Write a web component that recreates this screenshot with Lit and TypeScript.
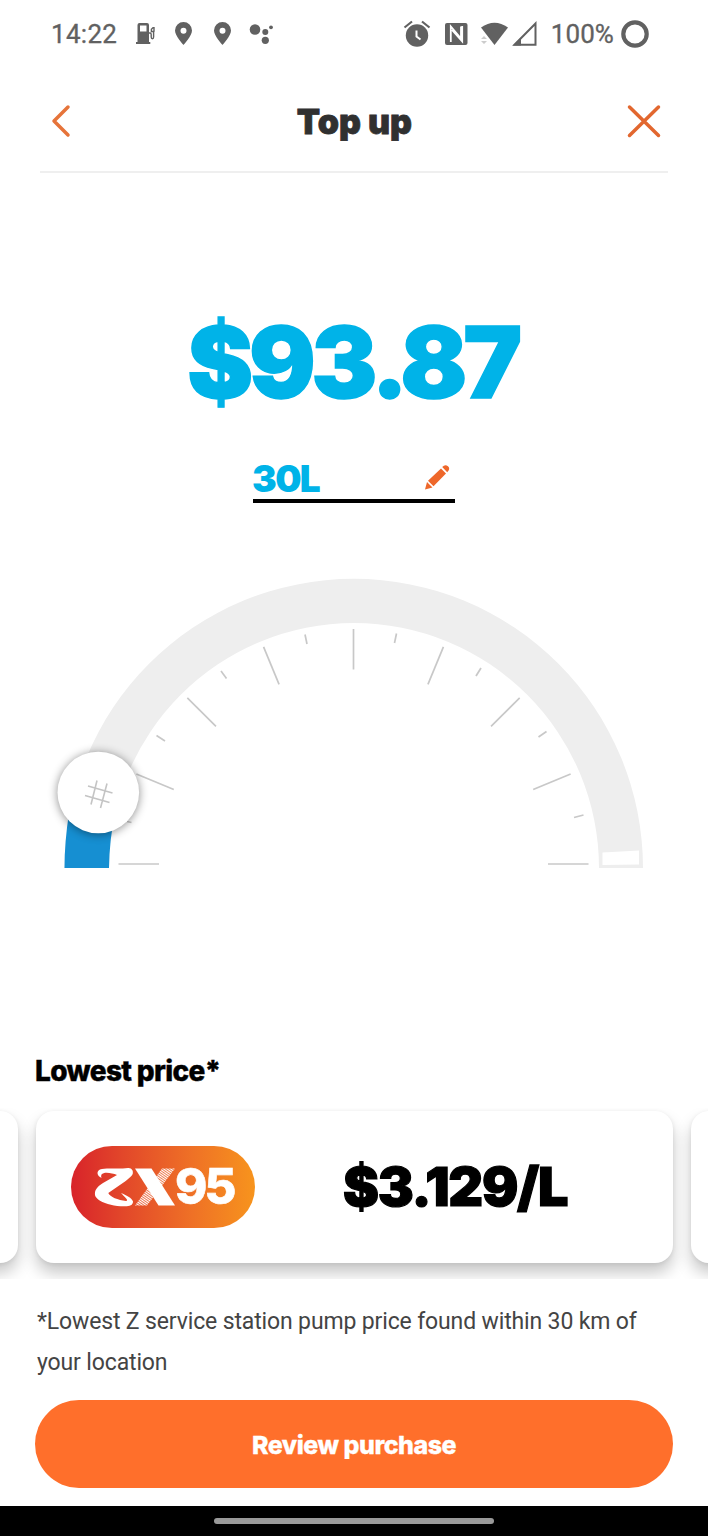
import { LitElement, html, svg, css, nothing } from "lit";
import { customElement, property } from "lit/decorators.js";

const polar = (r: number, deg: number) => {
  const a = (deg * Math.PI) / 180;
  return [289.5 - r * Math.cos(a), 287 - r * Math.sin(a)];
};

const MINOR_TICKS = [
  [63, 244.5, 67.5, 245.5],
  [92.5, 158.5, 101, 164],
  [157, 94, 162.5, 101.5],
  [241, 57.5, 243, 67],
  [332.5, 56.5, 330.5, 66],
  [417, 91, 412, 99],
  [482.5, 154.5, 474.5, 160],
  [519.5, 238, 510, 240.5],
];

@customElement("status-bar")
class StatusBar extends LitElement {
  static styles = css`
    :host { display: block; }
    .bar { height: 67px; display: flex; align-items: center; justify-content: space-between;
      padding: 0 59px 0 51px; color: #616161; font: 400 26px/30px Roboto, sans-serif; }
    svg { display: block; }
    .group { display: flex; align-items: center; }
    .time { letter-spacing: 0.3px; width: 83px; -webkit-text-stroke: 0.3px #616161; }
    .percent { letter-spacing: 0.1px; margin: 0 7px 0 13px; -webkit-text-stroke: 0.3px #616161; }
  `;
  render() {
    return html`<div class="bar">
      <div class="group">
        <span class="time">14:22</span>
        <svg width="144" height="30" viewBox="134 19 144 30" fill="#616161">
          <path fill-rule="evenodd" d="M137.500 42V25q0-2 2-2h7.500q2 0 2 2v17h1.300v2H136v-2zM140 25.500v6h6.500v-6z" />
          <path d="M149 33h1q1.200 0 1.200 1.500v2.500q0 1.700 1.200 1.700t1.200-1.700V31.500h-2.200v-2.300l1.600-1.400h1v4" fill="none" stroke="#616161" stroke-width="1.400" />
          <path fill-rule="evenodd" d="M183.500 22a8.500 8.500 0 0 1 8.500 8.500c0 5.500-8.500 14.500-8.500 14.500s-8.500-9-8.500-14.500a8.500 8.500 0 0 1 8.500-8.500zm0 5.700a3 3 0 1 0 0 6 3 3 0 0 0 0-6z" />
          <path fill-rule="evenodd" d="M222.500 22a8.500 8.500 0 0 1 8.500 8.500c0 5.500-8.500 14.500-8.500 14.500s-8.500-9-8.500-14.500a8.500 8.500 0 0 1 8.500-8.500zm0 5.700a3 3 0 1 0 0 6 3 3 0 0 0 0-6z" />
          <circle cx="255" cy="29.500" r="5.300" />
          <circle cx="265.300" cy="32" r="3" />
          <circle cx="271" cy="27.300" r="1.900" />
          <circle cx="265.300" cy="40.300" r="3.600" />
        </svg>
      </div>
      <div class="group">
        <svg width="136" height="30" viewBox="402 19 136 30" fill="#616161">
          <circle cx="417" cy="35.500" r="11.200" />
          <path d="M404.500 27.500l7.500-6M429.500 27.500l-7.500-6" stroke="#616161" stroke-width="2.200" />
          <path d="M416.500 30.500v6l4 3" fill="none" stroke="#fff" stroke-width="2" />
          <rect x="445" y="23" width="22.500" height="22" rx="2" />
          <path d="M450.800 42V26.500L461 38.500V26.500M462.200 26v15.500L452 30" fill="none" stroke="#fff" stroke-width="1.800" />
          <path d="M481 27.500q13.500-9.500 27 0L494.500 45z" />
          <path d="M481 39l3-3 3 3zM481 41l3 3 3-3z" fill="#ccc" />
          <path d="M514.500 44.700L535.500 23.500v21.200z" fill="none" stroke="#616161" stroke-width="2" />
          <path d="M513 45.500l8-8v8z" />
        </svg>
        <span class="percent">100%</span>
        <svg width="28" height="28" viewBox="0 0 28 28"><circle cx="14" cy="14" r="11.700" fill="none" stroke="#616161" stroke-width="4.200" /></svg>
      </div>
    </div>`;
  }
}

@customElement("fuel-gauge")
class FuelGauge extends LitElement {
  static styles = css`
    :host { display: block; }
    svg { display: block; overflow: visible; }
    .knob { filter: drop-shadow(0 1px 5px rgba(0, 0, 0, 0.45)); }
  `;
  render() {
    const major = Array.from({ length: 9 }, (_, i) => {
      const [x1, y1] = polar(235, i * 22.5);
      const [x2, y2] = polar(194.5, i * 22.5);
      return svg`<line x1=${x1} y1=${y1} x2=${x2} y2=${y2} />`;
    });
    return html`<svg width="580" height="292" viewBox="0 0 580 292">
      <path d="M.5 291A289.250 289.250 0 0 1 579 291H535A245 245 0 0 0 45 291z" fill="#eeeeee" />
      <path d="M538.500 275.500L575 273.500V287.500L538.500 288z" fill="#fff" />
      <path d="M.5 291Q.5 265 5 236H51Q45.500 262 45 291z" fill="#168fd2" />
      <g stroke="#c8c8c8" stroke-width="1.700">
        ${major}
        ${MINOR_TICKS.map((t) => svg`<line x1=${t[0]} y1=${t[1]} x2=${t[2]} y2=${t[3]} />`)}
      </g>
      <circle class="knob" cx="34.300" cy="215.500" r="40.800" fill="#fff" />
      <path d="M33 203.500l-6 24M43 206.500l-6.500 24.500M24 209l24.500 7M21 218.500l24.500 7" stroke="#c4c4c4" stroke-width="1.600" />
    </svg>`;
  }
}

@customElement("price-card")
class PriceCard extends LitElement {
  static styles = css`
    :host { display: flex; align-items: center; width: 637px; height: 152px; flex: none; box-sizing: border-box;
      padding-left: 35px; border-radius: 18px; background: #fff;
      box-shadow: 0 10px 16px rgba(0, 0, 0, 0.22), 0 1px 4px rgba(0, 0, 0, 0.07); }
    .badge { width: 184px; height: 82px; border-radius: 41px; display: flex; align-items: center;
      background: linear-gradient(90deg, #d8232a 0%, #e2472a 28%, #ef7126 66%, #f7941d 100%); }
    .mark { display: block; margin-left: 22px; }
    .octane { font: 800 49px/50px Inter, sans-serif; letter-spacing: -3px; color: #fff; margin-left: 0.5px;
      -webkit-text-stroke: 0.6px #fff; }
    .price { font: 900 54px/60px Inter, sans-serif; letter-spacing: -1.300px; color: #000; margin-left: 88.5px;
      -webkit-text-stroke: 1.200px #000; }
  `;
  @property() octane = "";
  @property() price = "";
  render() {
    if (!this.price) return nothing;
    return html`<div class="badge">
        <svg class="mark" width="82" height="40" viewBox="93 1168 82 40">
          <defs><pattern id="hatch" width="2" height="2" patternUnits="userSpaceOnUse" patternTransform="rotate(35)"><rect width="2" height="1.200" fill="#fff" /></pattern></defs>
          <path fill="#fff" d="M101.700 1179C96.500 1177 96.500 1172 100 1170.500C106 1168.500 118 1170.500 128 1169C132 1168.700 133.500 1172 132.700 1175C131 1179 124 1183 108.300 1194C110 1198 118 1201 126 1202C129.500 1201.500 124 1197.500 121 1194C126 1196 132 1199 133 1202.500C133 1206.500 129 1207.500 124 1207.300C115 1207.300 106 1205 100 1201.700C96 1199 94.500 1197 95 1193.500C95.500 1189.500 99 1186.500 103 1184L117 1176C112 1174 104 1172.500 101.500 1175.500C101 1177 101 1178 101.700 1179z" />
          <path d="M162 1169.500h13l-28 37h-12z" fill="url(#hatch)" />
          <path d="M135 1169.500h16.500l23.500 37h-16.500z" fill="#fff" />
        </svg>
        <span class="octane">${this.octane}</span>
      </div>
      <span class="price">${this.price}</span>`;
  }
}

@customElement("app-root")
class AppRoot extends LitElement {
  static styles = css`
    :host { display: block; font-family: Inter, sans-serif; color: #000; background: #fff; }
    svg { display: block; }
    .screen { width: 708px; height: 1536px; display: flex; flex-direction: column; overflow: hidden; background: #fff; }
    .header { height: 104px; margin: 0 40px; border-bottom: 2px solid #efefef; display: flex; justify-content: space-between;
      padding: 0 7px 0 10px; flex: none; }
    .header svg { margin-top: 35px; }
    .header .back { margin-right: 10px; }
    .title { margin-top: 34px; font-weight: 900; font-size: 34px; line-height: 42px; letter-spacing: 0.100px; color: #303030;
      -webkit-text-stroke: 0.800px #303030; }
    .amount { margin-top: 125px; margin-right: 3px; height: 128px; text-align: center; font-size: 99px; line-height: 128px; font-weight: 900;
      letter-spacing: -4.400px; color: #00b3e8; -webkit-text-stroke: 1.400px #00b3e8; }
    .litres { width: 202px; margin: 28px auto 0; display: flex; justify-content: space-between; align-items: center; height: 45px;
      border-bottom: 4px solid #000; color: #00b3e8; font-size: 37px; font-weight: 900; letter-spacing: -1.600px; }
    .litres span { margin: 3px 0 0 -1px; }
    .litres svg { margin-right: 4px; }
    .gauge { margin: 74px 0 0 64px; }
    .label { margin: 184px 0 0 35px; font-size: 28px; line-height: 36px; font-weight: 800; letter-spacing: -0.650px;
      -webkit-text-stroke: 0.400px #000; }
    .carousel { display: flex; gap: 18px; justify-content: center; margin-top: 19px; padding-top: 3px; height: 168px; overflow: hidden; align-items: flex-start; }
    .note { margin: 22px 37px 0; font: 400 23px/41px Roboto, sans-serif; color: #444; letter-spacing: -0.140px; }
    .review { display: block; margin: 17px 35px 0; height: 88px; border: 0; border-radius: 44px; background: #ff6f2b; color: #fff;
      font: 800 25px/90px Inter, sans-serif; letter-spacing: -0.500px; padding: 0; flex: none; -webkit-text-stroke: 0.300px #fff; }
    .nav { margin-top: auto; height: 30px; background: #000; display: flex; align-items: center; justify-content: center; }
    .handle { width: 280px; height: 6px; border-radius: 3px; background: #999; }
  `;
  render() {
    return html`<div class="screen">
      <status-bar></status-bar>
      <div class="header">
        <svg class="back" width="22" height="38" viewBox="0 0 22 38"><path d="M18 5L4 19l14 14" fill="none" stroke="#e6743a" stroke-width="3.500" stroke-linecap="round" stroke-linejoin="round" /></svg>
        <span class="title">Top up</span>
        <svg width="34" height="38" viewBox="0 0 34 38"><path d="M2.500 5l29 28.500M31.500 5l-29 28.500" stroke="#e2672f" stroke-width="3.500" stroke-linecap="round" /></svg>
      </div>
      <div class="amount">$93.87</div>
      <div class="litres"><span>30L</span>
        <svg width="28" height="28" viewBox="0 0 28 28" fill="#ee672a"><path d="M2 26.500l2-7.500 5.500 5.500zM5 17.800L18 5.500l5 5L10.500 23.300zM19.200 4q3-3.300 5.800-.7t-.8 6z" /></svg>
      </div>
      <fuel-gauge class="gauge"></fuel-gauge>
      <div class="label">Lowest price*</div>
      <div class="carousel">
        <price-card></price-card>
        <price-card octane="95" price="$3.129/L"></price-card>
        <price-card></price-card>
      </div>
      <div class="note">*Lowest Z service station pump price found within 30 km of your location</div>
      <button class="review">Review purchase</button>
      <div class="nav"><div class="handle"></div></div>
    </div>`;
  }
}
